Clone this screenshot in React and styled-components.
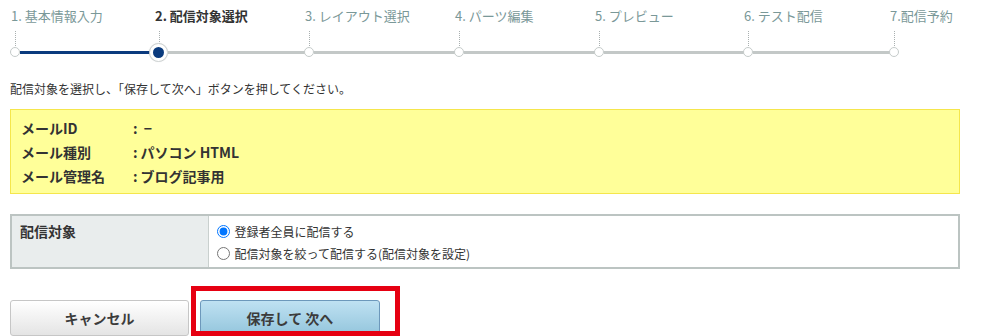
import React from 'react';
import styled, { createGlobalStyle, css } from 'styled-components';

const GlobalStyle = createGlobalStyle`
  html, body {
    margin: 0;
    padding: 0;
    overflow: hidden;
    background: #fff;
  }
  body {
    font-family: "Noto Sans CJK JP", "Noto Sans", sans-serif;
    color: #333;
  }
  * {
    box-sizing: border-box;
  }
`;

const Page = styled.div`
  padding: 0 21px 0 10px;
  width: 981px;
`;

const Steps = styled.ol`
  display: flex;
  list-style: none;
  margin: 0 0 0 1px;
  padding: 0;
`;

const Step = styled.li`
  display: flex;
  flex-direction: column;
  width: ${({ $w }) => ($w ? `${$w}px` : 'auto')};
  flex: ${({ $w }) => ($w ? 'none' : '1')};
`;

const StepLabel = styled.div`
  padding-top: 6px;
  line-height: 20px;
  font-size: 13px;
  white-space: nowrap;
  color: ${({ $active }) => ($active ? '#333' : '#7a9898')};
  font-weight: ${({ $active }) => ($active ? 700 : 400)};
`;

const Dotted = styled.div`
  margin: 5px 0 0 4px;
  height: 15px;
  border-left: 1px dotted #a9b0b0;
`;

const Track = styled.div`
  display: flex;
  align-items: center;
  height: 12px;
`;

const Node = styled.span`
  position: relative;
  z-index: 1;
  flex: none;
  border-radius: 50%;
  background: #fff;
  border: 1px solid #c5cbca;
  width: 10px;
  height: 10px;
  margin-left: -1px;
  ${({ $active }) =>
    $active &&
    css`
      width: 19px;
      height: 19px;
      margin-left: -6px;
      border-color: #cfd4d4;
      box-shadow: 0 0 1px rgba(0, 0, 0, 0.15);
      &::after {
        content: '';
        position: absolute;
        left: 3px;
        top: 3px;
        width: 11px;
        height: 11px;
        border-radius: 50%;
        background: #0b3b7e;
      }
    `}
`;

const Line = styled.span`
  flex: 1;
  height: 3px;
  background: ${({ $done }) => ($done ? '#0b3b7e' : '#c3c8c7')};
`;

const Lead = styled.p`
  margin: 21px 0 10px;
  font-size: 12px;
  line-height: 20px;
  color: #333;
`;

const InfoBox = styled.dl`
  margin: 0;
  padding: 6px 10px 5px;
  background: #ffff99;
  border: 1px solid #f5e64c;
  display: grid;
  grid-template-columns: 112px 1fr;
  font-size: 14px;
  font-weight: 700;
  line-height: 24px;
  color: #333;
`;

const InfoTerm = styled.dt`
  margin: 0;
`;

const InfoValue = styled.dd`
  margin: 0;
  &::before {
    content: ':';
    margin-right: 3px;
  }
`;

const FormTable = styled.table`
  width: 100%;
  margin-top: 20px;
  border-collapse: collapse;
  border: 2px solid #bcc4c2;
`;

const HeadCell = styled.th`
  width: 197px;
  padding: 5px 8px 0;
  vertical-align: top;
  text-align: left;
  background: #e9eded;
  border-right: 1px solid #c9d0ce;
  font-size: 14px;
  font-weight: 700;
  line-height: 20px;
  color: #333;
`;

const BodyCell = styled.td`
  padding: 4px 8px 3px;
  background: #fff;
`;

const Option = styled.label`
  display: flex;
  align-items: center;
  height: 22px;
  font-size: 12px;
  color: #333;
  input {
    width: 13px;
    height: 13px;
    margin: 0 5px 0 0;
  }
`;

const Actions = styled.div`
  display: flex;
  gap: 11px;
  margin-top: 31px;
`;

const ButtonWrap = styled.div`
  position: relative;
`;

const Button = styled.button`
  width: ${({ $primary }) => ($primary ? '180px' : '179px')};
  height: 36px;
  padding: 0;
  border-radius: 3px;
  font-family: "Noto Sans CJK JP", sans-serif;
  font-size: 14px;
  font-weight: 700;
  color: #3c3c3c;
  cursor: pointer;
  border: 1px solid ${({ $primary }) => ($primary ? '#6d98bb' : '#c6c6c6')};
  background: ${({ $primary }) =>
    $primary
      ? 'linear-gradient(#bfe1f2, #93c5dc)'
      : 'linear-gradient(#ffffff, #e4e4e4)'};
`;

const Highlight = styled.div`
  position: absolute;
  left: -9px;
  top: -14px;
  width: 209px;
  height: 50px;
  border: 5px solid #e60012;
  pointer-events: none;
`;

const steps = [
  { label: '1. 基本情報入力', w: 144 },
  { label: '2. 配信対象選択', w: 150 },
  { label: '3. レイアウト選択', w: 150 },
  { label: '4. パーツ編集', w: 140 },
  { label: '5. プレビュー', w: 149 },
  { label: '6. テスト配信', w: 146 },
  { label: '7.配信予約' },
];

const current = 1;

export default function App() {
  return (
    <Page>
      <GlobalStyle />
      <Steps>
        {steps.map((s, i) => (
          <Step key={s.label} $w={s.w}>
            <StepLabel $active={i === current}>{s.label}</StepLabel>
            <Dotted />
            <Track>
              <Node $active={i === current} />
              {i < steps.length - 1 && <Line $done={i < current} />}
            </Track>
          </Step>
        ))}
      </Steps>

      <Lead>配信対象を選択し、「保存して次へ」ボタンを押してください。</Lead>

      <InfoBox>
        <InfoTerm>メールID</InfoTerm>
        <InfoValue> −</InfoValue>
        <InfoTerm>メール種別</InfoTerm>
        <InfoValue>パソコン HTML</InfoValue>
        <InfoTerm>メール管理名</InfoTerm>
        <InfoValue>ブログ記事用</InfoValue>
      </InfoBox>

      <FormTable>
        <tbody>
          <tr>
            <HeadCell>配信対象</HeadCell>
            <BodyCell>
              <Option>
                <input type="radio" name="target" defaultChecked />
                登録者全員に配信する
              </Option>
              <Option>
                <input type="radio" name="target" />
                配信対象を絞って配信する(配信対象を設定)
              </Option>
            </BodyCell>
          </tr>
        </tbody>
      </FormTable>

      <Actions>
        <Button type="button">キャンセル</Button>
        <ButtonWrap>
          <Button type="button" $primary>
            保存して 次へ
          </Button>
          <Highlight />
        </ButtonWrap>
      </Actions>
    </Page>
  );
}
